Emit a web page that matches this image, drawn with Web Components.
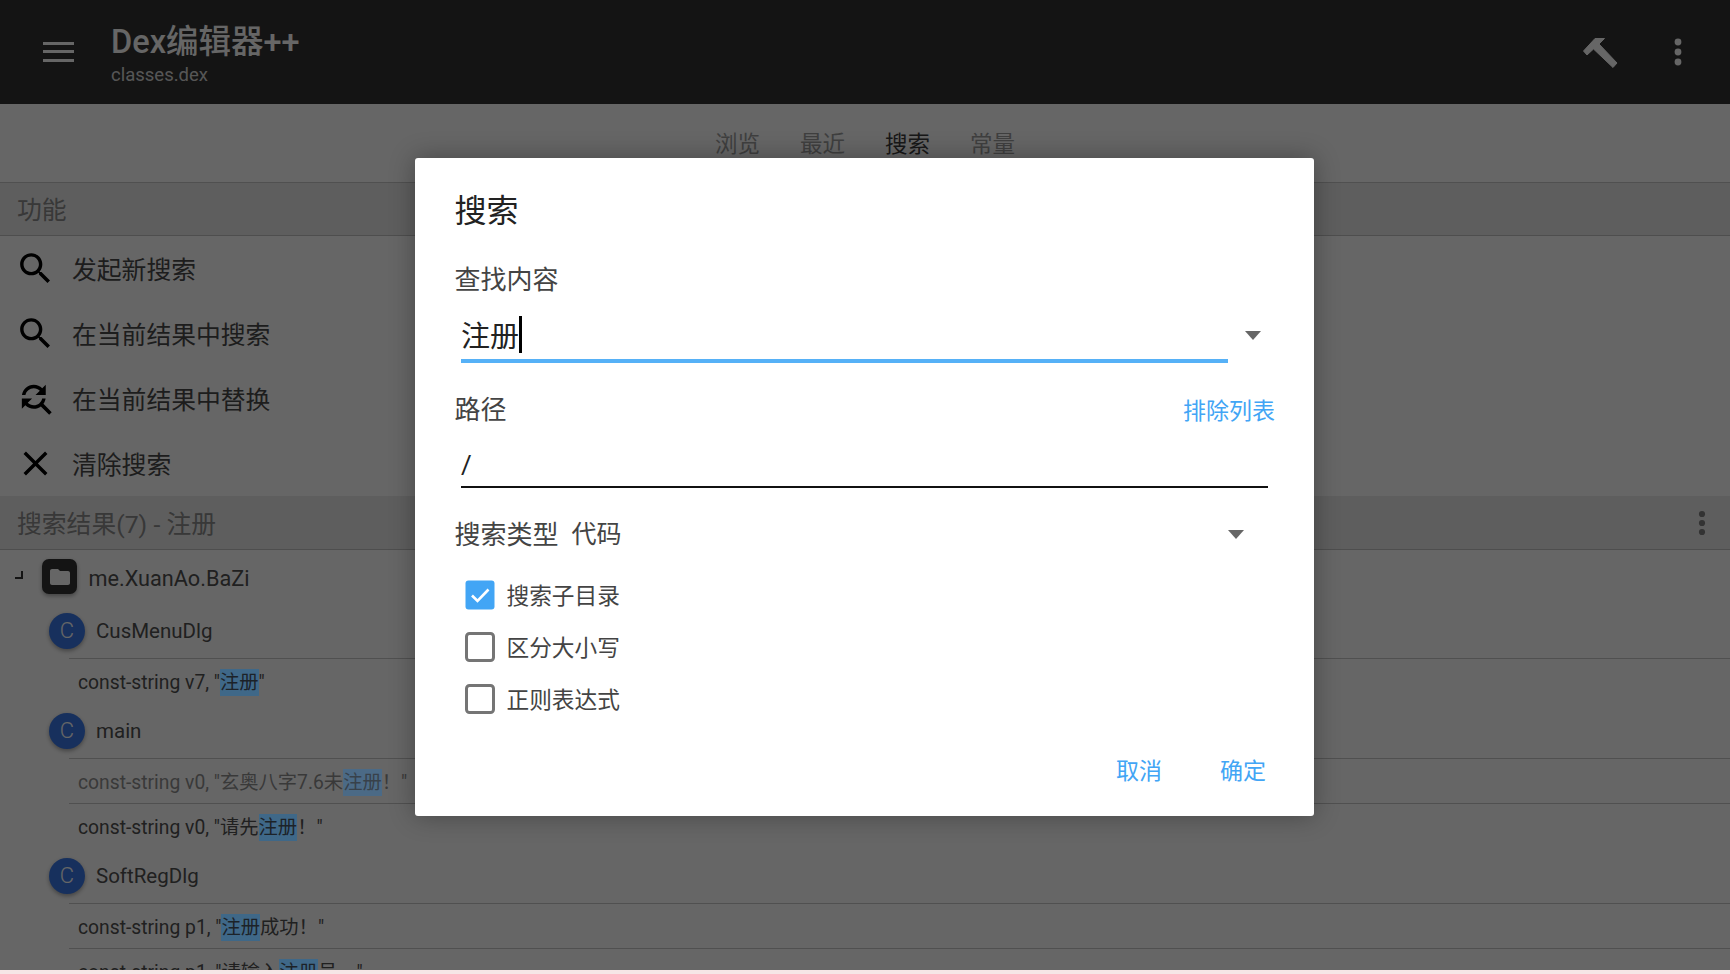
<!DOCTYPE html>
<html lang="zh">
<head>
<meta charset="utf-8">
<title>Dex编辑器++</title>
<style>
  html, body { margin: 0; height: 974px; overflow: hidden; background: #fff; }
  body { font-family: Roboto, "Noto Sans CJK SC", sans-serif; display: flex; flex-direction: column; }
  #app { position: relative; height: 970px; overflow: hidden; flex: none; }
  #strip { height: 4px; background: #f6e6e6; flex: none; }
</style>
</head>
<body>
<div id="app">
  <app-toolbar title-text="Dex编辑器++" sub-text="classes.dex"></app-toolbar>
  <app-tabs></app-tabs>
  <section-header>功能</section-header>
  <menu-row icon="search">发起新搜索</menu-row>
  <menu-row icon="search">在当前结果中搜索</menu-row>
  <menu-row icon="replace">在当前结果中替换</menu-row>
  <menu-row icon="close">清除搜索</menu-row>
  <section-header menu>搜索结果(7) - 注册</section-header>
  <package-row>me.XuanAo.BaZi</package-row>
  <class-row>CusMenuDlg</class-row>
  <const-row>const-string v7, "<mark>注册</mark>"</const-row>
  <class-row>main</class-row>
  <const-row dim>const-string v0, "玄奥八字7.6未<mark>注册</mark>！"</const-row>
  <const-row>const-string v0, "请先<mark>注册</mark>！"</const-row>
  <class-row>SoftRegDlg</class-row>
  <const-row>const-string p1, "<mark>注册</mark>成功！"</const-row>
  <const-row>const-string p1, "请输入<mark>注册</mark>号。"</const-row>
  <search-dialog></search-dialog>
</div>
<div id="strip"></div>

<script>
const ICONS = {
  search: 'M15.5 14h-.79l-.28-.27C15.41 12.59 16 11.11 16 9.5 16 5.91 13.09 3 9.5 3S3 5.91 3 9.5 5.91 16 9.5 16c1.61 0 3.09-.59 4.23-1.57l.27.28v.79l5 4.99L20.49 19l-4.99-5zm-6 0C7.01 14 5 11.99 5 9.5S7.01 5 9.5 5 14 7.01 14 9.5 11.99 14 9.5 14z',
  replace: 'M11 6c1.38 0 2.63.56 3.54 1.46L12 10h6V4l-2.05 2.05C14.68 4.78 12.93 4 11 4c-3.53 0-6.43 2.61-6.92 6H6.1c.46-2.28 2.48-4 4.9-4zm5.64 9.14c.66-.9 1.12-1.97 1.28-3.14H15.9c-.46 2.28-2.48 4-4.9 4-1.38 0-2.63-.56-3.54-1.46L10 12H4v6l2.05-2.05C7.32 17.22 9.07 18 11 18c1.55 0 2.98-.51 4.14-1.36L20 21.49 21.49 20l-4.85-4.86z',
  close: 'M19 6.41L17.59 5 12 10.59 6.41 5 5 6.41 10.59 12 5 17.59 6.41 19 12 13.41 17.59 19 19 17.59 13.41 12z',
  folder: 'M10 4H4c-1.1 0-1.99.9-1.99 2L2 18c0 1.1.9 2 2 2h16c1.1 0 2-.9 2-2V8c0-1.1-.9-2-2-2h-8l-2-2z'
};

// small base class, every element only supplies its shadow html
class Base extends HTMLElement {
  constructor() {
    super();
    this.attachShadow({ mode: 'open' }).innerHTML = this.render();
  }
}

class AppToolbar extends Base {
  render() {
    return `<style>
      :host { display: flex; align-items: center; height: 104px; background: #323232; color: #fff; padding: 0 48px 0 43px; box-sizing: border-box; }
      .burger { width: 31px; display: flex; flex-direction: column; gap: 5.5px; margin-top: -1px; }
      .burger i { display: block; height: 3px; background: #fff; }
      .titles { margin-left: 37px; flex: 1; display: flex; flex-direction: column; }
      .t { font-size: 32.5px; font-weight: 500; line-height: 36px; height: 36px; color: #fff; margin-top: 7px; }
      .s { font-size: 18.5px; line-height: 24px; margin-top: 3px; color: #d8d8d8; }
      svg { display: block; flex: none; }
    </style>
    <div class="burger"><i></i><i></i><i></i></div>
    <div class="titles">
      <span class="t">${this.getAttribute('title-text')}</span>
      <span class="s">${this.getAttribute('sub-text')}</span>
    </div>
    <svg width="40" height="40" viewBox="0 0 40 40" fill="#fff" stroke="#fff" stroke-width="1" stroke-linejoin="round" style="margin:-2px 54px 0 0">
      <path d="M3.5 20 15 7.5h9.5L19 13l18 19-4 4.5L13.5 18 7 24z"/>
    </svg>
    <svg width="8" height="28" viewBox="0 0 8 28" fill="#fff"><circle cx="4" cy="4" r="3.4"/><circle cx="4" cy="14" r="3.4"/><circle cx="4" cy="24" r="3.4"/></svg>`;
  }
}

class AppTabs extends Base {
  render() {
    return `<style>
      :host { display: flex; justify-content: center; gap: 40px; height: 79px; box-sizing: border-box; padding-top: 25px; border-bottom: 1px solid #c8c8c8; font-size: 22.5px; line-height: 30px; color: #9e9e9e; }
      .on { color: #3e3e3e; }
    </style>
    <span>浏览</span><span>最近</span><span class="on">搜索</span><span>常量</span>`;
  }
}

class SectionHeader extends Base {
  render() {
    return `<style>
      :host { display: flex; align-items: center; justify-content: space-between; height: 53px; box-sizing: border-box; background: #ebebeb; padding: 0 24px 2px 17px; border-bottom: 1px solid #c4c4c4; font-size: 24.8px; color: #8c8c8c; }
      :host([menu]) { height: 54px; }
      svg { display: block; }
    </style>
    <span><slot></slot></span>
    ${this.hasAttribute('menu') ? '<svg width="8" height="26" viewBox="0 0 8 26" fill="#808080" style="margin-top:2px"><circle cx="4" cy="4" r="3.1"/><circle cx="4" cy="13" r="3.1"/><circle cx="4" cy="22" r="3.1"/></svg>' : ''}`;
  }
}

class MenuRow extends Base {
  render() {
    return `<style>
      :host { display: flex; align-items: center; height: 65px; padding-left: 15px; font-size: 24.8px; color: #4a4a4a; }
      svg { width: 41px; height: 41px; margin-right: 16px; flex: none; }
      span { display: block; margin-top: -2px; }
    </style>
    <svg viewBox="0 0 24 24"><path fill="#000" d="${ICONS[this.getAttribute('icon')]}"/></svg>
    <span><slot></slot></span>`;
  }
}

class PackageRow extends Base {
  render() {
    return `<style>
      :host { display: flex; align-items: center; height: 53px; padding-left: 15px; font-size: 21.7px; color: #505050; }
      .corner { width: 8px; height: 8px; border-right: 2px solid #333; border-bottom: 2px solid #333; box-sizing: border-box; margin: -3px 19px 0 0; }
      .tile { width: 35px; height: 35px; border-radius: 7px; background: #323232; display: flex; align-items: center; justify-content: center; margin-right: 11.5px; box-shadow: 0 2px 4px rgba(0,0,0,.35); }
      svg { width: 24px; height: 24px; display: block; }
      .name { display: block; margin-top: 4px; }
    </style>
    <span class="corner"></span>
    <span class="tile"><svg viewBox="0 0 24 24"><path fill="#fff" d="${ICONS.folder}"/></svg></span>
    <span class="name"><slot></slot></span>`;
  }
}

class ClassRow extends Base {
  render() {
    return `<style>
      :host { display: flex; align-items: center; height: 55px; padding-left: 49px; box-sizing: border-box; font-size: 20.5px; color: #505050; }
      .c { width: 36px; height: 36px; border-radius: 50%; background: #3a78e8; color: #fff; display: flex; align-items: center; justify-content: center; font-size: 22px; font-weight: 300; margin-right: 11px; box-shadow: 0 2px 4px rgba(0,0,0,.35); }
    </style>
    <span class="c">C</span>
    <slot></slot>`;
  }
}

class ConstRow extends Base {
  render() {
    // the highlight keeps its colour through the dialog scrim, so it sits above it
    return `<style>
      :host { display: flex; align-items: center; height: 45px; box-sizing: border-box; margin-left: 69px; padding: 0 0 1px 9px; border-top: 1px solid #c8c8c8; font-size: 19.3px; color: #505050; white-space: pre; }
      :host([dim]) { color: #909090; }
      span { display: block; }
      ::slotted(mark) { position: relative; z-index: 2; background: #3f6888; padding: 2px 0; color: #1c2228; }
      :host([dim]) ::slotted(mark) { background: #4b6a86; color: #38414a; }
    </style>
    <span><slot></slot></span>`;
  }
}

class FormCheck extends Base {
  render() {
    const on = this.hasAttribute('checked');
    return `<style>
      :host { display: flex; align-items: center; height: 52px; padding-left: 10.5px; font-size: 22.7px; color: #444; }
      svg { width: 30px; height: 30px; margin-right: 11.5px; flex: none; display: block; }
      span { display: block; margin-top: -2px; }
    </style>
    ${on
      ? '<svg viewBox="0 0 30 30"><rect x="0.5" y="0.5" width="29" height="29" rx="3" fill="#42a5f5"/><path d="M7 15.5 12.5 21 23.5 9.5" fill="none" stroke="#fff" stroke-width="2.6"/></svg>'
      : '<svg viewBox="0 0 30 30"><rect x="1.5" y="1.5" width="27" height="27" rx="3" fill="none" stroke="#757575" stroke-width="3"/></svg>'}
    <span><slot></slot></span>`;
  }
}

class SearchDialog extends Base {
  render() {
    return `<style>
      :host { position: absolute; inset: 0; z-index: 1; background: rgba(0,0,0,.6); display: flex; justify-content: center; align-items: flex-start; padding-top: 158px; box-sizing: border-box; }
      .panel { width: 899px; height: 658px; margin-right: 1px; background: #fff; border-radius: 3px; box-shadow: 0 0 26px rgba(0,0,0,.32); box-sizing: border-box; padding: 27px 39px 0 39.5px; color: #444; display: flex; flex-direction: column; }
      .title { font-size: 32px; line-height: 52px; height: 77px; color: #222; flex: none; }
      .label { font-size: 26px; line-height: 36px; height: 36px; flex: none; display: flex; justify-content: space-between; }
      .link { color: #42a5f5; font-size: 23px; margin-top: 2px; }
      .combo { display: flex; height: 65px; flex: none; padding-left: 6.5px; }
      .field { flex: 1; border-bottom: 4px solid #56b1f7; box-sizing: border-box; font-size: 29px; color: #222; padding-top: 20px; line-height: 38px; display: flex; }
      .caret { width: 3px; height: 37px; background: #000; margin-top: -2px; }
      .arrow { width: 0; height: 0; border: 8px solid transparent; border-top: 9px solid #666; border-bottom: 0; flex: none; }
      .combo .arrow { margin: 33px 14px 0 17px; }
      .path { padding-left: 6.5px; height: 60px; flex: none; }
      .path div { height: 60px; width: 807px; box-sizing: border-box; border-bottom: 2px solid #111; font-size: 26px; line-height: 36px; padding-top: 19px; color: #222; }
      .gap1 { height: 29px; flex: none; }
      .gap2 { height: 26px; flex: none; }
      .type { display: flex; align-items: center; height: 36px; flex: none; font-size: 26px; }
      .type b { font-weight: 400; font-size: 25px; margin-left: 13px; flex: 1; }
      .type .arrow { margin: 4px 31px 0 0; }
      .checks { margin-top: 19px; flex: none; }
      .actions { display: flex; justify-content: flex-end; gap: 58px; height: 52px; align-items: center; margin-top: 18px; padding-right: 9px; color: #42a5f5; font-size: 23px; flex: none; }
    </style>
    <div class="panel">
      <div class="title">搜索</div>
      <div class="label">查找内容</div>
      <div class="combo">
        <div class="field"><span>注册</span><span class="caret"></span></div>
        <span class="arrow"></span>
      </div>
      <div class="gap1"></div>
      <div class="label"><span>路径</span><span class="link">排除列表</span></div>
      <div class="path"><div>/</div></div>
      <div class="gap2"></div>
      <div class="type"><span>搜索类型</span><b>代码</b><span class="arrow"></span></div>
      <div class="checks">
        <form-check checked>搜索子目录</form-check>
        <form-check>区分大小写</form-check>
        <form-check>正则表达式</form-check>
      </div>
      <div class="actions"><span>取消</span><span>确定</span></div>
    </div>`;
  }
}

customElements.define('app-toolbar', AppToolbar);
customElements.define('app-tabs', AppTabs);
customElements.define('section-header', SectionHeader);
customElements.define('menu-row', MenuRow);
customElements.define('package-row', PackageRow);
customElements.define('class-row', ClassRow);
customElements.define('const-row', ConstRow);
customElements.define('form-check', FormCheck);
customElements.define('search-dialog', SearchDialog);
</script>
</body>
</html>
